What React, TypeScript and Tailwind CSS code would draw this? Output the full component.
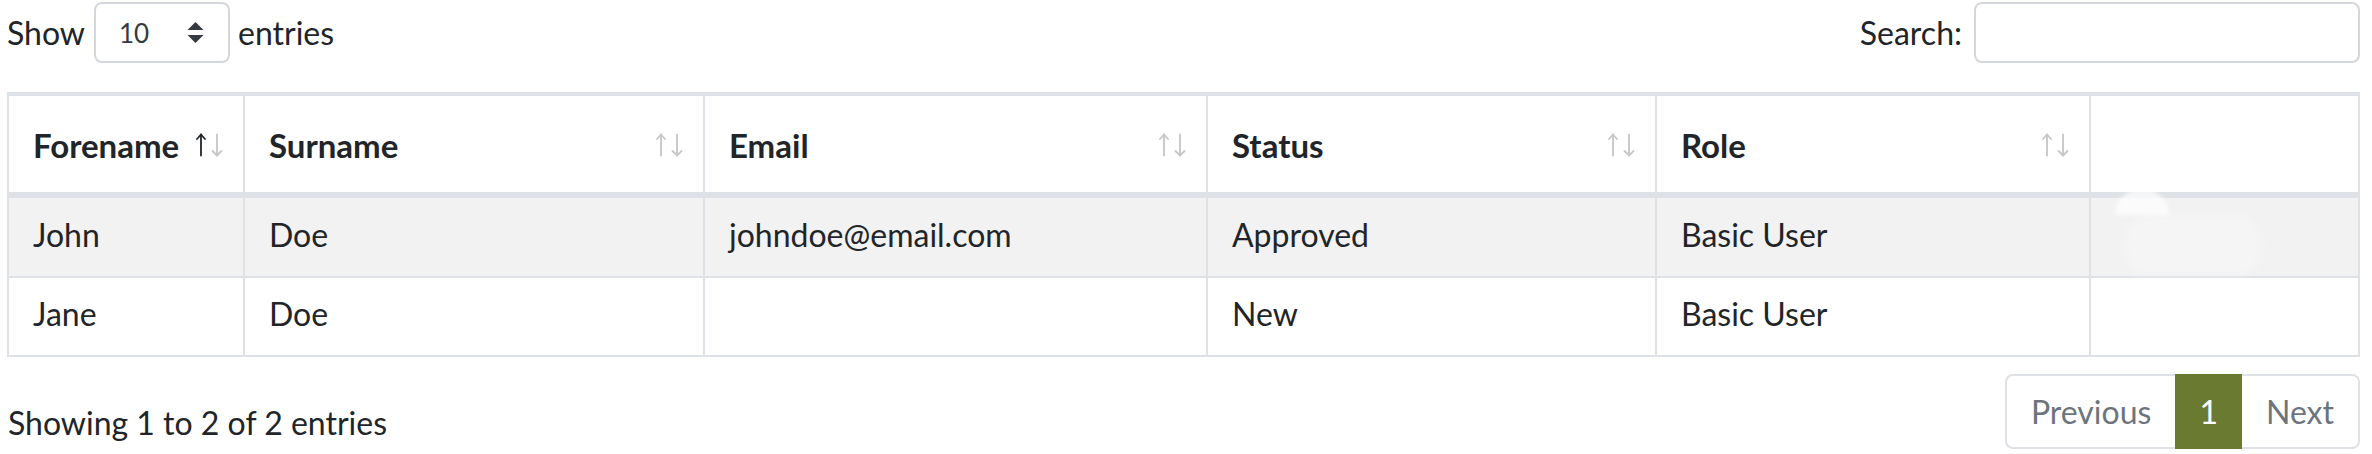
import React from 'react';

type Row = { forename: string; surname: string; email: string; status: string; role: string };

const rows: Row[] = [
  { forename: 'John', surname: 'Doe', email: 'johndoe@email.com', status: 'Approved', role: 'Basic User' },
  { forename: 'Jane', surname: 'Doe', email: '', status: 'New', role: 'Basic User' },
];

const grid = 'grid grid-cols-[236px_460px_503px_449px_434px_1fr]';

// Sorting arrows drawn the way DataTables shows them (up / down)
function SortIcon({ active = false }: { active?: boolean }) {
  return (
    <svg width="28" height="24" viewBox="0 0 28 24" fill="none" strokeWidth="1.8" strokeLinecap="round" strokeLinejoin="round">
      <g stroke={active ? '#212529' : '#c4c6c8'}>
        <path d="M5 22.5V1.5" />
        <path d="M1 6L5 1.5 9 6" />
      </g>
      <g stroke="#c4c6c8">
        <path d="M21 1.5v21" />
        <path d="M16.5 18l4.5 4.5 4.5-4.5" />
      </g>
    </svg>
  );
}

function HeaderCell({ label, last = false, active = false }: { label?: string; last?: boolean; active?: boolean }) {
  return (
    <div
      className={`flex items-center justify-between h-[96px] pt-[1px] pl-6 pr-[19px] ${last ? '' : 'border-r-2 border-[#dee2e6]'}`}
    >
      {label && <span className="font-bold text-[33px]">{label}</span>}
      {label && <SortIcon active={active} />}
    </div>
  );
}

function BodyCell({ children, last = false }: { children?: React.ReactNode; last?: boolean }) {
  return (
    <div className={`flex items-center pl-6 pb-[5px] ${last ? '' : 'border-r-2 border-[#dee2e6]'}`}>
      {children}
    </div>
  );
}

export default function App() {
  return (
    <div className="w-full bg-white pl-[7px] pr-[12px] pt-[2px] text-[32px] text-[#212529] font-['Lato',sans-serif] leading-[48px]">
      {/* length + search */}
      <div className="flex items-center justify-between h-[61px]">
        <div className="flex items-center">
          <span>Show</span>
          <div className="ml-[9px] mr-[8px] flex items-center justify-between w-[136px] h-[61px] border-2 border-[#d3d7dc] rounded-[8px] pl-[23px] pr-[24px]">
            <span className="text-[26px] text-[#343a40]">10</span>
            <svg width="17" height="21" viewBox="0 0 17 21">
              <path d="M8.5 0L16.5 8H0.5Z" fill="#343a40" />
              <path d="M8.5 21L16.5 13H0.5Z" fill="#343a40" />
            </svg>
          </div>
          <span>entries</span>
        </div>
        <div className="flex items-center">
          <span>Search:</span>
          <div className="ml-[12px] w-[386px] h-[61px] border-2 border-[#d3d7dc] rounded-[8px]" />
        </div>
      </div>

      {/* table */}
      <div className="relative mt-[29px] border-x-2 border-t-4 border-b-2 border-[#dee2e6]">
        <div className={`${grid} border-b-[6px] border-[#dee2e6]`}>
          <HeaderCell label="Forename" active />
          <HeaderCell label="Surname" />
          <HeaderCell label="Email" />
          <HeaderCell label="Status" />
          <HeaderCell label="Role" />
          <HeaderCell last />
        </div>
        {rows.map((r, i) => (
          <div
            key={r.forename}
            className={`${grid} ${i === 0 ? 'h-[80px] bg-[#f2f2f2] border-b-2 border-[#dee2e6]' : 'h-[77px]'}`}
          >
            <BodyCell>{r.forename}</BodyCell>
            <BodyCell>{r.surname}</BodyCell>
            <BodyCell>{r.email}</BodyCell>
            <BodyCell>{r.status}</BodyCell>
            <BodyCell>{r.role}</BodyCell>
            <BodyCell last />
          </div>
        ))}
        {/* faint white smudge over the last column */}
        <div className="absolute left-[2106px] top-[93px] w-[54px] h-[26px] rounded-t-full bg-white/70 blur-[2px]" />
        <div className="absolute left-[2114px] top-[118px] w-[140px] h-[64px] rounded-[30px] bg-white/25 blur-[6px]" />
      </div>

      {/* info + pagination */}
      <div className="flex items-start justify-between mt-[17px]">
        <div className="pt-[25px] pl-px">Showing 1 to 2 of 2 entries</div>
        <div className="flex h-[75px]">
          <div className="flex items-center px-6 border-y-2 border-l-2 border-[#dee2e6] rounded-l-[8px] text-[#6c757d]">Previous</div>
          <div className="flex items-center px-6 bg-[#6a7a30] text-white">1</div>
          <div className="flex items-center px-6 border-y-2 border-r-2 border-[#dee2e6] rounded-r-[8px] text-[#6c757d]">Next</div>
        </div>
      </div>
    </div>
  );
}
